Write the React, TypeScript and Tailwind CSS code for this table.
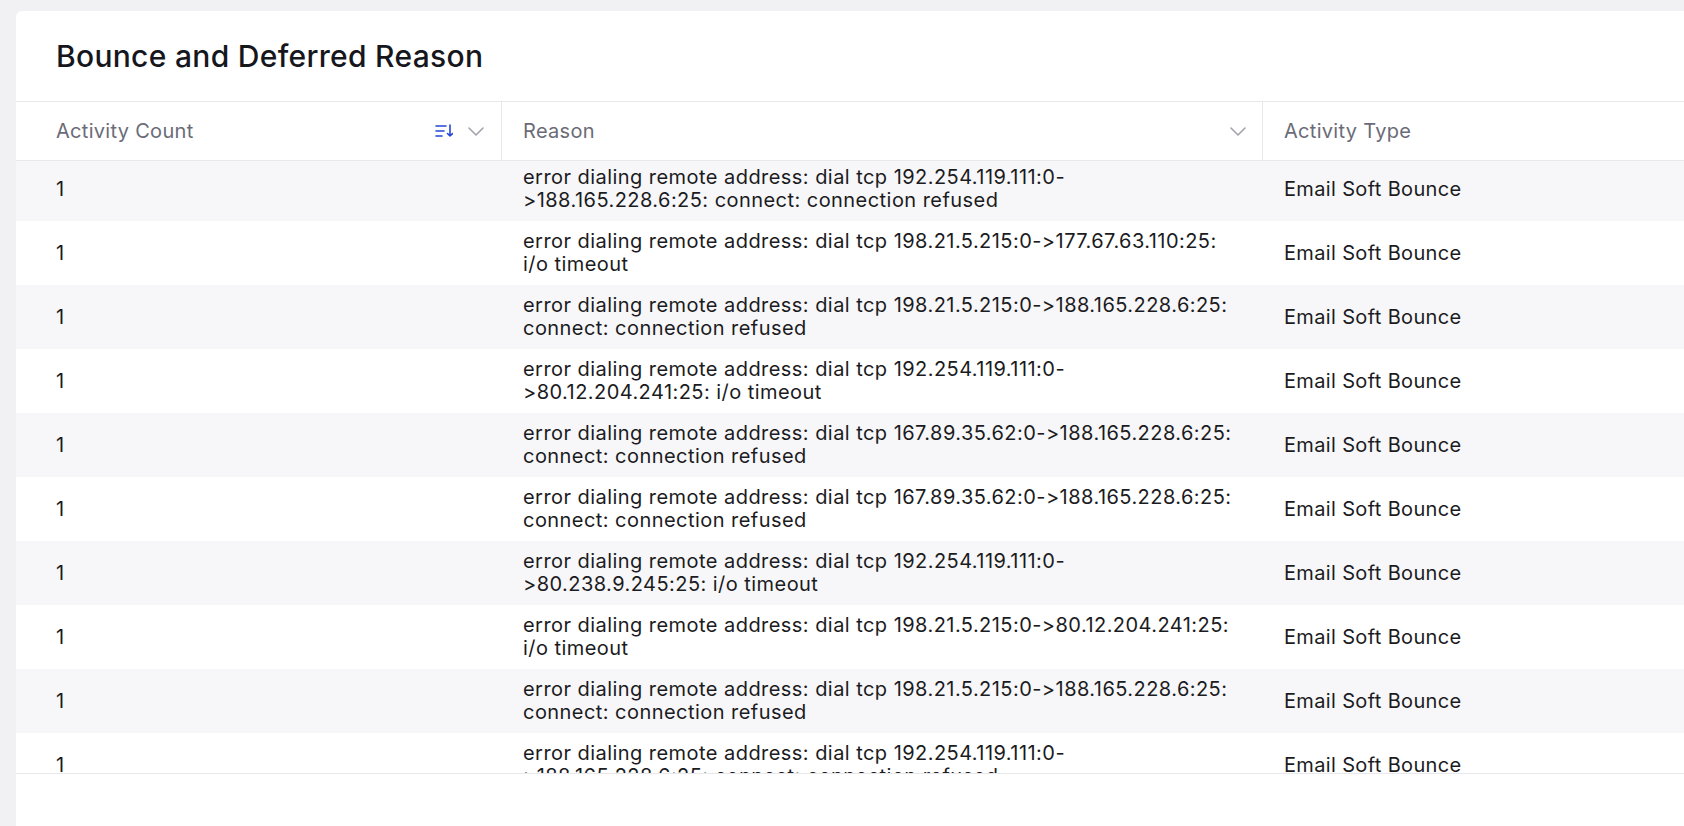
import React from "react";

const rows: [string, string][] = [
  ["error dialing remote address: dial tcp 192.254.119.111:0-", ">188.165.228.6:25: connect: connection refused"],
  ["error dialing remote address: dial tcp 198.21.5.215:0->177.67.63.110:25:", "i/o timeout"],
  ["error dialing remote address: dial tcp 198.21.5.215:0->188.165.228.6:25:", "connect: connection refused"],
  ["error dialing remote address: dial tcp 192.254.119.111:0-", ">80.12.204.241:25: i/o timeout"],
  ["error dialing remote address: dial tcp 167.89.35.62:0->188.165.228.6:25:", "connect: connection refused"],
  ["error dialing remote address: dial tcp 167.89.35.62:0->188.165.228.6:25:", "connect: connection refused"],
  ["error dialing remote address: dial tcp 192.254.119.111:0-", ">80.238.9.245:25: i/o timeout"],
  ["error dialing remote address: dial tcp 198.21.5.215:0->80.12.204.241:25:", "i/o timeout"],
  ["error dialing remote address: dial tcp 198.21.5.215:0->188.165.228.6:25:", "connect: connection refused"],
  ["error dialing remote address: dial tcp 192.254.119.111:0-", ">188.165.228.6:25: connect: connection refused"],
];

function Chevron() {
  return (
    <svg width="16" height="9" viewBox="0 0 16 9" fill="none" className="text-[#a3a3ad]">
      <path d="M1 1l7 7 7-7" stroke="currentColor" strokeWidth="1.6" strokeLinecap="round" strokeLinejoin="round" />
    </svg>
  );
}

function SortIcon() {
  return (
    <svg width="18" height="14" viewBox="0 0 18 14" fill="none" className="text-[#2447d6]">
      <path d="M1 2h10M1 7h8M1 12h6" stroke="currentColor" strokeWidth="1.6" strokeLinecap="round" />
      <path d="M15 1v11M12.5 9.5L15 12l2.5-2.5" stroke="currentColor" strokeWidth="1.6" strokeLinecap="round" strokeLinejoin="round" />
    </svg>
  );
}

export default function App() {
  return (
    <div
      className="h-[826px] w-full overflow-hidden bg-[#f1f1f4] pl-4 pt-[11px] [font-feature-settings:'calt'_0] [font-variant-ligatures:none]"
      style={{ fontFamily: "Inter, 'Noto Sans', sans-serif" }}
    >
      <div className="flex h-[900px] w-[1720px] flex-col rounded-tl-md bg-white">
        <div className="flex h-[91px] items-center border-b border-[#e8e8ec] pl-[40px]">
          <h1 className="text-[30px] font-medium tracking-[0.3px] text-[#16161d]">Bounce and Deferred Reason</h1>
        </div>
        <div className="flex h-[59px] border-b border-[#e8e8ec] text-[20px] tracking-[0.3px] text-[#6b6b77]">
          <div className="flex w-[486px] items-center border-r border-[#e8e8ec] pl-[40px] pr-[17px]">
            <span className="flex-1">Activity Count</span>
            <div className="flex items-center gap-[15px]">
              <SortIcon />
              <Chevron />
            </div>
          </div>
          <div className="flex w-[761px] items-center border-r border-[#e8e8ec] pl-[21px] pr-[16px]">
            <span className="flex-1">Reason</span>
            <Chevron />
          </div>
          <div className="flex flex-1 items-center pl-[21px]">
            <span>Activity Type</span>
          </div>
        </div>
        <div className="h-[612px] overflow-hidden">
          <div className="-mt-1">
            {rows.map((r, i) => (
              <div
                key={i}
                className={`flex h-16 items-center text-[20px] text-[#1b1b22] ${i % 2 === 0 ? "bg-[#f7f7f9]" : "bg-white"}`}
              >
                <div className="w-[486px] pl-[40px]">1</div>
                <div className="w-[761px] pl-[21px] leading-[23px] tracking-[0.45px]">
                  <div className="whitespace-nowrap">{r[0]}</div>
                  <div className="whitespace-nowrap">{r[1]}</div>
                </div>
                <div className="flex-1 pl-[21px] tracking-[0.35px]">Email Soft Bounce</div>
              </div>
            ))}
          </div>
        </div>
        <div className="flex-1 border-t border-[#e8e8ec]"></div>
      </div>
    </div>
  );
}
